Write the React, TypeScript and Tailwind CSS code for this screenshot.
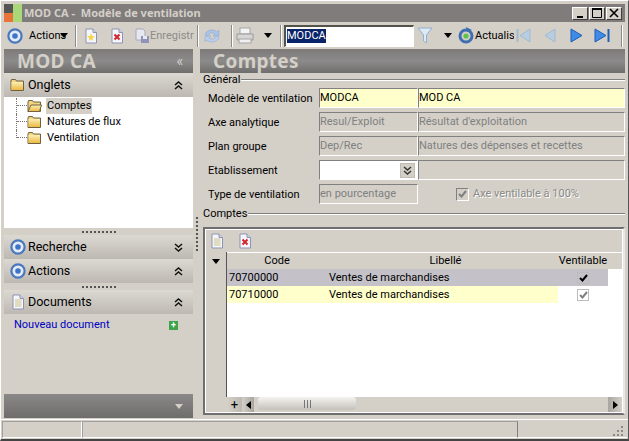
import type { ReactNode } from "react";

const font = { fontFamily: 'Roboto, "Noto Sans", sans-serif' };
const heading = { fontFamily: '"Noto Sans", sans-serif' };

function Ring({ size = 16 }: { size?: number }) {
  return (
    <svg width={size} height={size} viewBox="0 0 16 16" className="shrink-0">
      <circle cx="8" cy="8" r="6.6" fill="#e4ebf7" stroke="#4a78bd" strokeWidth="2.2" />
      <circle cx="8" cy="8" r="2.8" fill="#3d74c8" />
    </svg>
  );
}

function Folder({ open = false }: { open?: boolean }) {
  return (
    <svg width="15" height="14" viewBox="0 0 15 14" className="shrink-0">
      <defs>
        <linearGradient id="fold" x1="0" y1="0" x2="0" y2="1">
          <stop offset="0" stopColor="#fbeeb5" />
          <stop offset="1" stopColor="#ecb93f" />
        </linearGradient>
      </defs>
      <path d="M1 3 L1.5 1.5 H5.5 L6.5 3 H13.5 V12.5 H1 Z" fill="#f2d67e" stroke="#6f6244" strokeWidth="1" />
      {open ? (
        <path d="M1 12.5 L4 6 H14.5 L12.5 12.5 Z" fill="url(#fold)" stroke="#6f6244" strokeWidth="1" />
      ) : (
        <rect x="1.5" y="4" width="11.5" height="8" fill="url(#fold)" />
      )}
    </svg>
  );
}

function DocIcon({ kind }: { kind: "new" | "del" | "plain" }) {
  return (
    <svg width="14" height="16" viewBox="0 0 14 16" className="shrink-0">
      <path d="M2 1 H9 L12.5 4.5 V15 H2 Z" fill="#f5f6fb" stroke="#8d93b0" strokeWidth="1" />
      <path d="M9 1 V4.5 H12.5" fill="#d5d9ea" stroke="#8d93b0" strokeWidth="1" />
      {kind === "new" && <path d="M7 5 L8 8 L11 8.5 L8.5 10 L9 13 L7 11.2 L5 13 L5.5 10 L3 8.5 L6 8 Z" fill="#f3d53f" />}
      {kind === "del" && <path d="M4.5 6.5 L9.5 11.5 M9.5 6.5 L4.5 11.5" stroke="#d5232a" strokeWidth="2" />}
      {kind === "plain" && <path d="M4 6 H10.5 M4 8 H10.5 M4 10 H10.5 M4 12 H10.5" stroke="#c9c28a" strokeWidth="1" />}
    </svg>
  );
}

function Caret({ color = "#000000" }: { color?: string }) {
  return (
    <svg width="8" height="5" viewBox="0 0 8 5" className="shrink-0">
      <path d="M0 0 H8 L4 5 Z" fill={color} />
    </svg>
  );
}

function Chevrons({ up = false, color = "#111111" }: { up?: boolean; color?: string }) {
  return (
    <svg width="9" height="9" viewBox="0 0 9 9" className="shrink-0">
      <path
        d={up ? "M1 4 L4.5 1 L8 4 M1 8 L4.5 5 L8 8" : "M1 1 L4.5 4 L8 1 M1 5 L4.5 8 L8 5"}
        fill="none"
        stroke={color}
        strokeWidth="1.5"
      />
    </svg>
  );
}

function Sep({ className }: { className: string }) {
  return <div className={`h-[22px] w-[2px] shrink-0 border-l border-[#8a8a86] bg-white ${className}`} />;
}

function NavIcon({ dir, bar, active }: { dir: "l" | "r"; bar?: boolean; active?: boolean }) {
  const fill = active ? "#3f8be8" : "#b7cde2";
  const line = active ? "#1f5fb5" : "#a3b9cf";
  const w = bar ? 16 : 13;
  return (
    <svg width={w} height="15" viewBox={`0 0 ${w} 15`} className="shrink-0">
      {dir === "l" ? (
        <path d={`M${w - 2} 1 V14 L${bar ? 4 : 1} 7.5 Z`} fill={fill} stroke={line} />
      ) : (
        <path d={`M1 1 V14 L${w - (bar ? 4 : 1)} 7.5 Z`} fill={fill} stroke={line} />
      )}
      {bar && dir === "l" && <rect x="0.5" y="1" width="2" height="13" fill={line} />}
      {bar && dir === "r" && <rect x={w - 2.5} y="1" width="2" height="13" fill={line} />}
    </svg>
  );
}

function Toolbar() {
  return (
    <div className="flex h-[27px] shrink-0 items-center pl-[3px] text-[11px] text-black">
      <Ring />
      <span className="ml-[6px] w-[31px] shrink-0 whitespace-nowrap pt-[1px]">Actions</span>
      <Caret />
      <Sep className="ml-[7px]" />
      <div className="ml-[7px]"><DocIcon kind="new" /></div>
      <div className="ml-[12px]"><DocIcon kind="del" /></div>
      <div className="ml-[11px] flex w-[58px] shrink-0 items-center text-[#8c8c88]">
        <svg width="15" height="16" viewBox="0 0 15 16" className="shrink-0">
          <path d="M1 1 H8 L10 3 V12 H1 Z" fill="#e6e7ef" stroke="#a6a9bd" />
          <rect x="6" y="8" width="8" height="7" fill="#8f93b8" />
          <rect x="8" y="8" width="4" height="3" fill="#e8e8f0" />
        </svg>
        <span className="pt-[1px]">Enregistr</span>
      </div>
      <Sep className="ml-[4px]" />
      <div className="ml-[4px]">
        <svg width="18" height="16" viewBox="0 0 18 16" className="block">
          <path d="M2 7 C3 2 10 0 14 4 L16 2 V8 H10 L12 6 C9 4 6 5 5 8 Z" fill="#a9c3e6" stroke="#8ba6cf" strokeWidth="0.5" />
          <path d="M16 9 C15 14 8 16 4 12 L2 14 V8 H8 L6 10 C9 12 12 11 13 8 Z" fill="#b7cdea" stroke="#8ba6cf" strokeWidth="0.5" />
        </svg>
      </div>
      <Sep className="ml-[10px]" />
      <div className="ml-[3px]">
        <svg width="18" height="17" viewBox="0 0 18 17" className="block">
          <rect x="4" y="1" width="10" height="6" fill="#f4f4f4" stroke="#a5a5a5" />
          <path d="M1 7 H17 V13 H1 Z" fill="#d6d6d6" stroke="#9a9a9a" />
          <rect x="3" y="12" width="12" height="4" fill="#efefef" stroke="#a5a5a5" />
        </svg>
      </div>
      <div className="ml-[10px]"><Caret /></div>
      <Sep className="ml-[8px]" />
      <div className="ml-[2px] flex h-[22px] w-[130px] shrink-0 items-center border border-t-[2px] border-l-[2px] border-[#55524c] border-r-white border-b-white bg-white pl-[1px]">
        <span className="bg-[#0a246a] leading-[14px] text-white">MODCA</span>
      </div>
      <div className="ml-[3px]">
        <svg width="16" height="17" viewBox="0 0 16 17" className="block">
          <path d="M1 1 H15 L9.5 8 V16 L6.5 14 V8 Z" fill="#dfe9f4" stroke="#8fb0cf" />
        </svg>
      </div>
      <div className="ml-[11px]"><Caret /></div>
      <div className="ml-[6px]">
        <svg width="17" height="17" viewBox="0 0 17 17" className="block">
          <circle cx="8" cy="9" r="6" fill="none" stroke="#3f6fb0" strokeWidth="3" />
          <path d="M8 0 L14 3 L9 5 Z" fill="#3f6fb0" />
          <circle cx="8" cy="9" r="2.6" fill="#5cc24a" />
        </svg>
      </div>
      <span className="w-[39px] shrink-0 overflow-hidden whitespace-nowrap pt-[1px]">Actualisi</span>
      <div className="ml-[2px]"><NavIcon dir="l" bar /></div>
      <div className="ml-[12px]"><NavIcon dir="l" /></div>
      <div className="ml-[13px]"><NavIcon dir="r" active /></div>
      <div className="ml-[11px]"><NavIcon dir="r" bar active /></div>
      <Sep className="ml-[11px]" />
    </div>
  );
}

function Section({ icon, title, up }: { icon: ReactNode; title: string; up: boolean }) {
  return (
    <div className="flex h-[24px] shrink-0 items-center bg-gradient-to-b from-[#dcd9d2] to-[#bdb9b2] pl-[5px] pr-[10px] text-[12.5px] text-black">
      <div className="flex w-[17px] justify-center">{icon}</div>
      <span className="ml-[2px] flex-1 pt-[1px]">{title}</span>
      <Chevrons up={up} />
    </div>
  );
}

function Splitter() {
  return (
    <div className="flex h-[7px] shrink-0 items-center justify-center">
      <div className="h-[2px] w-[34px] bg-[repeating-linear-gradient(90deg,#555_0_2px,transparent_2px_4px)]" />
    </div>
  );
}

function TreeItem({ label, open, last }: { label: string; open?: boolean; last?: boolean }) {
  return (
    <div className="flex h-[16px] items-center">
      <div className={`w-[11px] shrink-0 self-start border-l border-dotted border-[#777] ${last ? "h-[8px]" : "h-[16px]"}`}>
        <div className="h-[8px] border-b border-dotted border-[#777]" />
      </div>
      <Folder open={open} />
      <span className={`ml-[4px] px-[1px] leading-[16px] ${open ? "bg-[#d4d0c8]" : ""}`}>{label}</span>
    </div>
  );
}

function LeftPanel() {
  return (
    <div className="flex w-[189px] shrink-0 flex-col">
      <div className="flex h-[24px] shrink-0 items-center bg-gradient-to-b from-[#7d7a79] via-[#8c8b8b] to-[#6f6d6c] pl-[13px] pr-[10px]">
        <span style={heading} className="flex-1 text-[19px] font-bold tracking-[0.3px] text-[#d4d0c8]">MOD CA</span>
        <span className="text-[14px] leading-none text-[#d4d0c8]">«</span>
      </div>
      <Section icon={<Folder />} title="Onglets" up />
      <div className="h-[131px] shrink-0 bg-white pl-[12px] pt-[1px] text-[11px] text-black">
        <TreeItem label="Comptes" open />
        <TreeItem label="Natures de flux" />
        <TreeItem label="Ventilation" last />
      </div>
      <Splitter />
      <Section icon={<Ring />} title="Recherche" up={false} />
      <Section icon={<Ring />} title="Actions" up />
      <Splitter />
      <Section icon={<DocIcon kind="plain" />} title="Documents" up />
      <div className="flex h-[22px] shrink-0 items-center pl-[10px] pr-[15px] text-[11px] text-[#0000c0]">
        <span className="flex-1 pt-[1px]">Nouveau document</span>
        <div className="flex h-[9px] w-[9px] items-center justify-center bg-[#3fa34a] text-[9px] font-bold leading-none text-white">+</div>
      </div>
      <div className="flex-1" />
      <div className="flex h-[24px] shrink-0 items-center justify-end bg-gradient-to-b from-[#8a8888] to-[#6f6d6c] pr-[10px]">
        <Caret color="#d4d0c8" />
      </div>
    </div>
  );
}

function GroupTitle({ label, lineClass }: { label: string; lineClass?: string }) {
  return (
    <div className={`flex shrink-0 items-center text-[11px] text-black ${lineClass ?? ""}`}>
      <span className="leading-[14px]">{label}</span>
      <div className="ml-[1px] h-[2px] flex-1 border-t border-[#808080] bg-white" />
    </div>
  );
}

const sunken = "border border-t-[#808080] border-l-[#808080] border-r-white border-b-white";

function Field({ label, code, name, yellow }: { label: string; code: string; name: string; yellow?: boolean }) {
  const tone = yellow ? "bg-[#ffffcc] text-black" : "text-[#808080]";
  return (
    <div className="flex h-[20px] items-center">
      <span className="w-[115px] shrink-0 whitespace-nowrap pl-[4px] pt-[2px] text-black">{label}</span>
      <div className={`flex h-full w-[99px] shrink-0 items-center ${sunken} ${tone} ${yellow ? "border-r-[#ffffcc]" : ""}`}>{code}</div>
      <div className={`flex h-full flex-1 items-center ${sunken} ${tone}`}>{name}</div>
    </div>
  );
}

function CellCheck({ color }: { color: string }) {
  return (
    <div className="flex h-[12px] w-[12px] items-center justify-center border border-[#bcbcbc]">
      <svg width="9" height="8" viewBox="0 0 9 8">
        <path d="M1 4 L3.5 6.5 L8 1" fill="none" stroke={color} strokeWidth="2" />
      </svg>
    </div>
  );
}

function GridRow({ code, bg, checkBg, check }: { code: string; bg: string; checkBg: string; check: string }) {
  return (
    <div className="flex h-[17px] w-[381px] shrink-0 items-center">
      <div className={`flex h-full w-[331px] items-center pl-[2px] pt-[2px] ${bg}`}>
        <span className="w-[100px]">{code}</span>
        <span>Ventes de marchandises</span>
      </div>
      <div className={`flex h-full flex-1 items-center justify-center ${checkBg}`}>
        <CellCheck color={check} />
      </div>
    </div>
  );
}

function Grid() {
  return (
    <div className="mt-[6px] flex h-[188px] shrink-0 flex-col border-2 border-t-[#6f6f6f] border-l-[#6f6f6f] border-r-[#e8e8e8] border-b-[#6f6f6f] text-[11px] text-black">
      <div className="flex flex-1 flex-col border border-white">
        <div className="flex h-[22px] shrink-0 items-center gap-[14px] pl-[4px]">
          <DocIcon kind="plain" />
          <DocIcon kind="del" />
        </div>
        <div className="flex min-h-0 flex-1">
          <div className="flex w-[21px] shrink-0 justify-center border-r border-[#555] pt-[7px]">
            <Caret />
          </div>
          <div className="flex min-w-0 flex-1 flex-col bg-white">
            <div className="flex h-[17px] shrink-0 items-center border-t border-white bg-[#d4d0c8]">
              <span className="w-[100px] text-center">Code</span>
              <span className="w-[231px] pl-[6px] text-center">Libellé</span>
              <span className="w-[50px] text-center">Ventilable</span>
            </div>
            <GridRow code="70700000" bg="bg-[#c4c2c8]" checkBg="bg-[#c4c2c8]" check="#000000" />
            <GridRow code="70710000" bg="bg-[#ffffcc]" checkBg="bg-white" check="#808080" />
          </div>
        </div>
        <div className="flex h-[15px] shrink-0 items-stretch bg-[#d4d0c8]">
          <div className="w-[21px]" />
          <div className="flex w-[15px] items-center justify-center bg-gradient-to-r from-[#d4d0c8] to-[#bdb9b2] text-[13px] leading-none">+</div>
          <div className="flex w-[12px] items-center justify-center bg-gradient-to-r from-[#d4d0c8] to-[#a8a5a0]">
            <svg width="5" height="8" viewBox="0 0 5 8"><path d="M5 0 V8 L0 4 Z" fill="#000" /></svg>
          </div>
          <div className="ml-[4px] flex h-[13px] w-[98px] items-center justify-end rounded-[3px] bg-gradient-to-b from-[#f4f3f0] to-[#c4c1ba] pr-[45px]">
            <div className="h-[8px] w-[7px] bg-[repeating-linear-gradient(90deg,#777_0_1px,transparent_1px_3px)]" />
          </div>
          <div className="flex-1" />
          <div className="flex w-[14px] items-center justify-center bg-gradient-to-r from-[#a8a5a0] to-[#d4d0c8]">
            <svg width="5" height="8" viewBox="0 0 5 8"><path d="M0 0 V8 L5 4 Z" fill="#000" /></svg>
          </div>
        </div>
      </div>
    </div>
  );
}

function RightPanel() {
  return (
    <div className="flex min-w-0 flex-1 flex-col">
      <div className="flex h-[24px] shrink-0 items-center bg-gradient-to-b from-[#7d7a79] via-[#8c8b8b] to-[#6f6d6c] pl-[13px]">
        <span style={heading} className="text-[19px] font-bold tracking-[0.3px] text-[#d4d0c8]">Comptes</span>
      </div>
      <div className="flex min-h-0 flex-1 flex-col pl-[3px] text-[11px]">
        <GroupTitle label="Général" />
        <div className="mt-[1px] flex shrink-0 flex-col gap-[4px] pl-[1px]">
          <Field label="Modèle de ventilation" code="MODCA" name="MOD CA" yellow />
          <Field label="Axe analytique" code="Resul/Exploit" name="Résultat d'exploitation" />
          <Field label="Plan groupe" code="Dep/Rec" name="Natures des dépenses et recettes" />
          <div className="flex h-[20px] items-center">
            <span className="w-[115px] shrink-0 pl-[4px] pt-[2px] text-black">Etablissement</span>
            <div className={`flex h-full w-[99px] shrink-0 items-center justify-end bg-white pr-[2px] ${sunken}`}>
              <div className="flex h-[15px] w-[15px] items-center justify-center border border-[#c0bcb4] bg-[#d4d0c8]">
                <Chevrons color="#333333" />
              </div>
            </div>
            <div className={`h-full flex-1 ${sunken}`} />
          </div>
          <div className="flex h-[20px] items-center">
            <span className="w-[115px] shrink-0 pl-[4px] pt-[2px] text-black">Type de ventilation</span>
            <div className={`flex h-full w-[99px] shrink-0 items-center text-[#808080] ${sunken}`}>en pourcentage</div>
            <div className="flex flex-1 items-center pl-[38px] text-[#8a8a86] [text-shadow:1px_1px_0_#ffffff]">
              <div className={`flex h-[13px] w-[13px] items-center justify-center ${sunken}`}>
                <svg width="9" height="8" viewBox="0 0 9 8">
                  <path d="M1 4 L3.5 6.5 L8 1" fill="none" stroke="#808080" strokeWidth="2" />
                </svg>
              </div>
              <span className="ml-[4px]">Axe ventilable à 100%</span>
            </div>
          </div>
        </div>
        <GroupTitle label="Comptes" lineClass="mt-[3px]" />
        <Grid />
      </div>
    </div>
  );
}

function WinButton({ children }: { children: ReactNode }) {
  return (
    <div className="ml-[1px] flex h-[13px] w-[16px] items-center justify-center border border-t-white border-l-white border-r-[#404040] border-b-[#404040] bg-[#d4d0c8]">
      {children}
    </div>
  );
}

export default function App() {
  return (
    <div style={font} className="flex h-[441px] w-[629px] flex-col overflow-hidden border-t border-r border-b-2 border-l border-t-white border-r-[#555] border-b-[#444] border-l-white bg-[#d4d0c8] px-[3px] pt-[3px]">
      {/* barre de titre */}
      <div className="flex h-[18px] shrink-0 items-center bg-[#807c7c] pr-[3px]">
        <svg width="18" height="18" viewBox="0 0 18 18" className="shrink-0">
          <rect x="0" y="0" width="9" height="9" fill="#555" />
          <rect x="0" y="9" width="9" height="9" fill="#e8743a" />
          <rect x="9" y="0" width="9" height="18" fill="#a8d878" />
        </svg>
        <span style={heading} className="ml-[2px] flex-1 whitespace-pre text-[11px] font-bold text-[#d4d0c8]">MOD CA -  Modèle de ventilation</span>
        <WinButton>
          <svg width="10" height="10" viewBox="0 0 10 10"><rect x="2" y="8" width="6" height="2" fill="#000" /></svg>
        </WinButton>
        <WinButton>
          <svg width="10" height="10" viewBox="0 0 10 10"><path d="M0.5 1.5 H9.5 V9.5 H0.5 Z" fill="none" stroke="#000" /><rect x="0" y="0" width="10" height="2" fill="#000" /></svg>
        </WinButton>
        <WinButton>
          <svg width="10" height="10" viewBox="0 0 10 10"><path d="M1 1 L9 9 M9 1 L1 9" stroke="#000" strokeWidth="1.6" /></svg>
        </WinButton>
      </div>
      <Toolbar />
      <div className="flex min-h-0 flex-1">
        <LeftPanel />
        <div className="flex w-[7px] shrink-0 items-center justify-center">
          <div className="h-[34px] w-[2px] bg-[repeating-linear-gradient(180deg,#555_0_2px,transparent_2px_4px)]" />
        </div>
        <RightPanel />
      </div>
      {/* barre d'état */}
      <div className="-mx-[3px] mt-[1px] flex h-[20px] shrink-0 items-stretch border-t border-white px-[1px] py-[1px]">
        <div className="w-[80px] border border-t-[#a0a0a0] border-l-[#a0a0a0] border-r-white border-b-white" />
        <div className="w-[436px] border border-t-[#a0a0a0] border-l-[#a0a0a0] border-r-[#808080] border-b-white" />
        <div className="flex flex-1 items-end justify-end border-b border-white pr-[3px]">
          <svg width="11" height="11" viewBox="0 0 11 11">
            <path d="M8 0 h2 v2 h-2 Z M8 4 h2 v2 h-2 Z M8 8 h2 v2 h-2 Z M4 4 h2 v2 h-2 Z M4 8 h2 v2 h-2 Z M0 8 h2 v2 h-2 Z" fill="#8a8a86" />
          </svg>
        </div>
      </div>
    </div>
  );
}
